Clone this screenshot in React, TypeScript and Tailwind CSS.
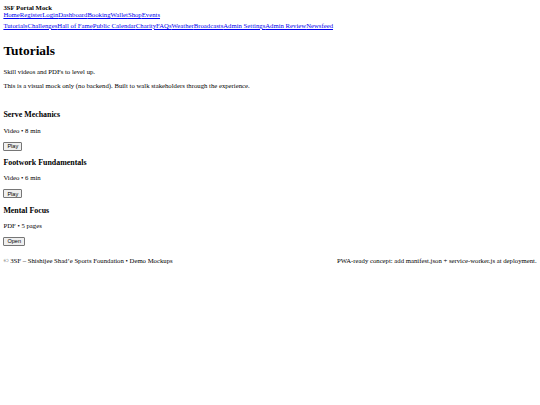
const navTop = ["Home", "Register", "Login", "Dashboard", "Booking", "Wallet", "Shop", "Events"];
const navBottom = [
  "Tutorials",
  "Challenges",
  "Hall of Fame",
  "Public Calendar",
  "Charity",
  "FAQs",
  "Weather",
  "Broadcasts",
  "Admin Settings",
  "Admin Review",
  "Newsfeed",
];

const tutorials = [
  { title: "Serve Mechanics", meta: "Video • 8 min", action: "Play" },
  { title: "Footwork Fundamentals", meta: "Video • 6 min", action: "Play" },
  { title: "Mental Focus", meta: "PDF • 5 pages", action: "Open" },
];

function NavRow({ items }: { items: string[] }) {
  return (
    <nav className="flex flex-wrap">
      {items.map((item) => (
        <a key={item} href="#" className="text-[#0000ee] underline">
          {item}
        </a>
      ))}
    </nav>
  );
}

export default function App() {
  return (
    <div className="min-h-screen bg-white px-[3.4px] pt-[3.5px] font-['Liberation_Serif',serif] text-[6.72px] leading-[1.15] text-black">
      <header>
        <div className="font-bold">3SF Portal Mock</div>
        <div className="flex flex-col gap-[3px]">
          <NavRow items={navTop} />
          <NavRow items={navBottom} />
        </div>
      </header>

      <main>
        <h1 className="mt-[13px] mb-[10px] text-[13.4px] font-bold">Tutorials</h1>
        <p className="my-[6.7px]">Skill videos and PDFs to level up.</p>
        <p className="my-[6.7px]">This is a visual mock only (no backend). Built to walk stakeholders through the experience.</p>

        <div className="mt-[20px]">
          {tutorials.map((t) => (
            <section key={t.title}>
              <h3 className="my-[7.3px] text-[7.9px] font-bold">{t.title}</h3>
              <p className="my-[7.3px]">{t.meta}</p>
              <button className="h-[9px] rounded-[1px] border border-[#767676] bg-[#efefef] px-[3px] font-['Liberation_Sans',sans-serif] text-[5.6px] leading-[6px]">
                {t.action}
              </button>
            </section>
          ))}
        </div>
      </main>

      <footer className="mt-[11px] flex justify-between">
        <span>© 3SF – Shishijee Shad’e Sports Foundation • Demo Mockups</span>
        <span>PWA-ready concept: add manifest.json + service-worker.js at deployment.</span>
      </footer>
    </div>
  );
}
